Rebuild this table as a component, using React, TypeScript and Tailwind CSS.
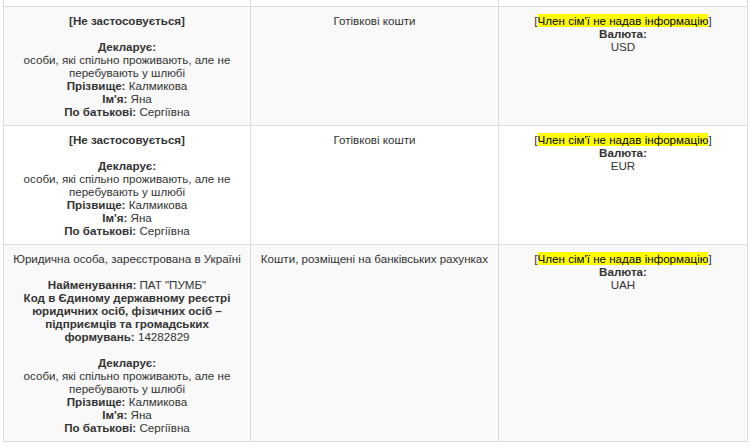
import React from "react";

type Person = { surname: string; name: string; patronymic: string };

const person: Person = { surname: "Калмикова", name: "Яна", patronymic: "Сергіївна" };

const Declarant = ({ p }: { p: Person }) => (
    <>
        <b>Декларує:</b>
        <br />
        особи, які спільно проживають, але не перебувають у шлюбі
        <br />
        <b>Прізвище:</b> {p.surname}
        <br />
        <b>Ім'я:</b> {p.name}
        <br />
        <b>По батькові:</b> {p.patronymic}
    </>
);

const Currency = ({ code }: { code: string }) => (
    <>
        [<span className="bg-[#ffff00] text-black">Член сім'ї не надав інформацію</span>]
        <br />
        <b>Валюта:</b>
        <br />
        {code}
    </>
);

const rows = [
    {
        owner: (
            <>
                <b>[Не застосовується]</b>
                <br />
                <br />
                <Declarant p={person} />
            </>
        ),
        kind: "Готівкові кошти",
        currency: "USD",
    },
    {
        owner: (
            <>
                <b>[Не застосовується]</b>
                <br />
                <br />
                <Declarant p={person} />
            </>
        ),
        kind: "Готівкові кошти",
        currency: "EUR",
    },
    {
        owner: (
            <>
                Юридична особа, зареєстрована в Україні
                <br />
                <br />
                <b>Найменування:</b> ПАТ "ПУМБ"
                <br />
                <b>Код в Єдиному державному реєстрі юридичних осіб, фізичних осіб – підприємців та громадських формувань:</b> 14282829
                <br />
                <br />
                <Declarant p={person} />
            </>
        ),
        kind: "Кошти, розміщені на банківських рахунках",
        currency: "UAH",
    },
];

const cell = "border border-[#dddddd] px-[5px] pt-[7px] pb-[7px] align-top text-center";

export default function App() {
    return (
        <div className="w-[750px] h-[448px] overflow-hidden bg-white font-['Liberation_Sans',Arial,sans-serif] text-[11.6px] leading-[13px] text-[#333333]">
            <table className="ml-[3px] -mt-px w-[744px] table-fixed border-collapse">
                <colgroup>
                    <col className="w-[247px]" />
                    <col className="w-[248px]" />
                    <col className="w-[249px]" />
                </colgroup>
                <tbody>
                    <tr className="bg-white">
                        <td className="border border-[#dddddd] h-[7px] p-0" />
                        <td className="border border-[#dddddd] h-[7px] p-0" />
                        <td className="border border-[#dddddd] h-[7px] p-0" />
                    </tr>
                    {rows.map((row, idx) => (
                        <tr key={row.currency} className={idx % 2 === 0 ? "bg-[#f9f9f9]" : "bg-white"}>
                            <td className={cell}>{row.owner}</td>
                            <td className={cell}>{row.kind}</td>
                            <td className={cell}>
                                <Currency code={row.currency} />
                            </td>
                        </tr>
                    ))}
                </tbody>
            </table>
        </div>
    );
}
